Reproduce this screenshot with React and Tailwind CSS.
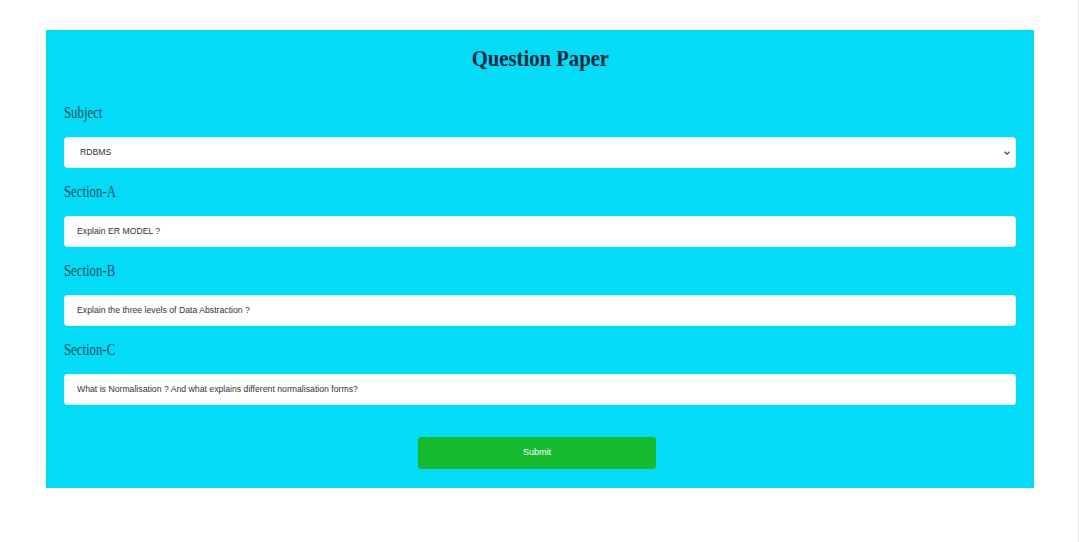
export default function App() {
  const serif = { fontFamily: '"Liberation Serif", "Times New Roman", serif' };
  const sans = { fontFamily: '"Liberation Sans", Arial, sans-serif' };
  const Label = ({ children }) => (
    <div className="text-[16px] leading-[20px] text-[#124f5e] mt-[14px] mb-[14px]" style={serif}>
      <span className="inline-block origin-left scale-x-[0.8]">{children}</span>
    </div>
  );
  const Field = ({ children }) => (
    <div className="h-[31px] bg-white rounded-[3px] border border-[#d9f4f6] flex items-center px-[12px] text-[8.7px] text-[#333]" style={sans}>
      {children}
    </div>
  );
  return (
    <div className="w-[1080px] h-[542px] bg-white pt-[30px] relative">
      <div className="ml-[46px] w-[988px] bg-[#04dbf6] px-[18px] pt-[15px] pb-[19px] flex flex-col">
        <h1 className="text-center text-[23px] leading-[28px] font-bold text-[#0b2a3f]" style={serif}>
          <span className="inline-block scale-x-[0.9]">Question Paper</span>
        </h1>
        <div className="h-[16px]" />
        <Label>Subject</Label>
        <div className="h-[31px] bg-white rounded-[3px] border border-[#d9f4f6] flex items-center justify-between pl-[15px] pr-[4px] text-[8.7px] text-[#333]" style={sans}>
          <span>RDBMS</span>
          <svg width="8" height="8" viewBox="0 0 10 10">
            <path d="M2 3.5 L5 6.5 L8 3.5" fill="none" stroke="#444" strokeWidth="1.6" />
          </svg>
        </div>
        <Label>Section-A</Label>
        <Field>Explain ER MODEL ?</Field>
        <Label>Section-B</Label>
        <Field>Explain the three levels of Data Abstraction ?</Field>
        <Label>Section-C</Label>
        <Field>What is Normalisation ? And what explains different normalisation forms?</Field>
        <div className="flex justify-center mt-[32px]">
          <button className="w-[238px] h-[32px] bg-[#17bb31] rounded-[3px] text-white text-[9px] ml-[-6px]" style={sans}>
            Submit
          </button>
        </div>
      </div>
      <div className="absolute right-[1px] top-0 h-full w-[1px] bg-[#ececec]" />
    </div>
  );
}
